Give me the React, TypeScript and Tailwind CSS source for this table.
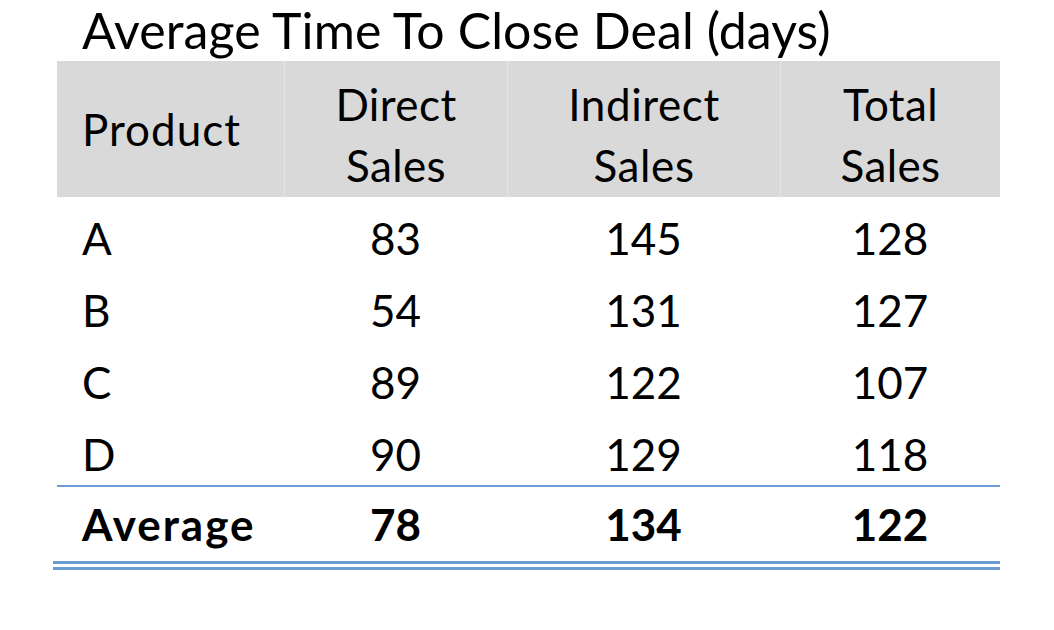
import React from "react";

const rows = [
  ["A", "83", "145", "128"],
  ["B", "54", "131", "127"],
  ["C", "89", "122", "107"],
  ["D", "90", "129", "118"],
];

const cols = "grid grid-cols-[227px_223px_273px_220px]";

export default function App() {
  return (
    <div className="w-[1054px] h-[630px] bg-white text-black font-['Lato',sans-serif] pl-[57px]">
      <div className="h-[61px] pl-[25px] text-[50px] leading-[60px] tracking-[0.1px]">
        Average Time To Close Deal (days)
      </div>
      <div className="w-[943px]">
        <div className={`${cols} h-[136px] bg-[#d9d9d9] text-[44px]`}>
          <div className="pl-[25px] leading-[136px] tracking-[1px]">Product</div>
          <div className="border-l border-[#e6e6e6] text-center leading-[61px] pt-[13px] tracking-[0.4px]">
            Direct
            <br />
            Sales
          </div>
          <div className="border-l border-[#e6e6e6] text-center leading-[61px] pt-[13px] tracking-[0.6px]">
            Indirect
            <br />
            Sales
          </div>
          <div className="border-l border-[#e6e6e6] text-center leading-[61px] pt-[13px] tracking-[0.4px]">
            Total
            <br />
            Sales
          </div>
        </div>
        {rows.map((r) => (
          <div key={r[0]} className={`${cols} h-[72px] text-[44px] leading-[62px] pt-[10px]`}>
            <div className="pl-[25px]">{r[0]}</div>
            <div className="text-center">{r[1]}</div>
            <div className="text-center">{r[2]}</div>
            <div className="text-center">{r[3]}</div>
          </div>
        ))}
        <div className="h-[2px] bg-[#6b9bd2]" />
        <div className={`${cols} h-[74px] text-[44px] leading-[74px] font-bold`}>
          <div className="pl-[25px] tracking-[2px]">Average</div>
          <div className="text-center">78</div>
          <div className="text-center">134</div>
          <div className="text-center">122</div>
        </div>
        <div className="-ml-[4px] h-[9px] border-y-[3px] border-[#6b9bd2]" />
      </div>
    </div>
  );
}
